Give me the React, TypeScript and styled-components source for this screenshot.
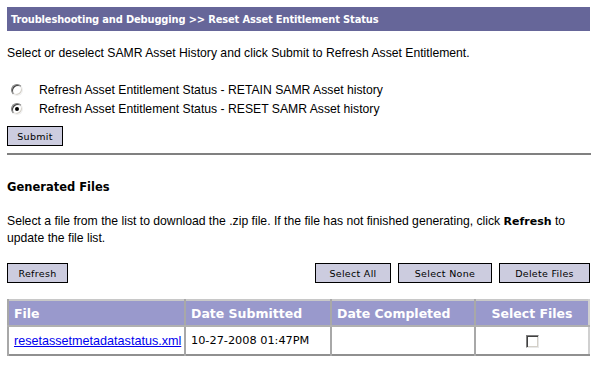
import React from "react";
import styled, { createGlobalStyle } from "styled-components";

const Global = createGlobalStyle`
  html, body { margin: 0; padding: 0; background: #ffffff; }
  body { padding: 7px 0 0 7px; font-family: "Liberation Sans", Arial, sans-serif; font-size: 12px; color: #000; }
`;

const Page = styled.div`
  width: 584px;
  display: flex;
  flex-direction: column;
`;

const TitleBar = styled.div`
  width: 583px;
  height: 24px;
  background: #666699;
  color: #ffffff;
  font-family: "DejaVu Sans Condensed", "DejaVu Sans", Verdana, sans-serif;
  font-stretch: condensed;
  font-weight: bold;
  font-size: 11px;
  letter-spacing: -0.15px;
  display: flex;
  align-items: center;
  padding-left: 4px;
  box-sizing: border-box;
`;

const Text = styled.p<{ $top: number }>`
  margin: ${(p) => p.$top}px 0 0 0;
  font-family: "Liberation Sans", Arial, sans-serif;
  font-size: 12.2px;
  line-height: 16px;
`;

const Strong = styled.b`
  font-family: "DejaVu Sans", Verdana, sans-serif;
  font-size: 11px;
  font-weight: bold;
`;

const RadioList = styled.div`
  margin-top: 19px;
  display: flex;
  flex-direction: column;
`;

const RadioRow = styled.label`
  height: 19px;
  display: flex;
  align-items: center;
  font-size: 12.2px;
`;

const RadioDot = styled.span<{ $checked?: boolean }>`
  width: 12px;
  height: 12px;
  margin-left: 4px;
  margin-right: 16px;
  box-sizing: border-box;
  border-radius: 50%;
  border: 1px solid;
  border-color: #808080 #f0f0f0 #f0f0f0 #808080;
  box-shadow: inset 1px 1px 0 #404040, inset -1px -1px 0 #d4d0c8;
  background: #ffffff;
  display: flex;
  align-items: center;
  justify-content: center;
  &::after {
    content: "";
    width: 4px;
    height: 4px;
    border-radius: 50%;
    background: ${(p) => (p.$checked ? "#000" : "transparent")};
  }
`;

const Button = styled.button<{ $w: number }>`
  width: ${(p) => p.$w}px;
  height: 20px;
  padding: 0;
  margin: 0;
  background: #ccccdf;
  border: 1px solid #000000;
  font-family: "DejaVu Sans", Verdana, sans-serif;
  font-size: 9.5px;
  letter-spacing: 0.3px;
  color: #000;
  cursor: pointer;
`;

const SubmitWrap = styled.div`
  margin-top: 8px;
  display: flex;
`;

const Divider = styled.hr`
  margin: 7px 0 0 0;
  width: 584px;
  height: 2px;
  border: none;
  background: #808080;
`;

const Heading = styled.h2`
  margin: 25px 0 0 0;
  font-family: "DejaVu Sans", Verdana, sans-serif;
  font-size: 11.5px;
  font-weight: bold;
  line-height: 14px;
`;

const ButtonBar = styled.div`
  margin-top: 17px;
  width: 583px;
  display: flex;
  align-items: center;
`;

const Spacer = styled.div`
  flex: 1;
`;

const ButtonGroup = styled.div`
  display: flex;
  gap: 7px;
`;

const Table = styled.table`
  margin-top: 16px;
  width: 583px;
  border-collapse: collapse;
  table-layout: fixed;
  border-top: 2px solid #c8c8c8;
  border-left: 2px solid #a0a0a0;
  border-right: 2px solid #d0d0d0;
  border-bottom: 2px solid #909090;
`;

const Th = styled.th<{ $center?: boolean }>`
  background: #9999cc;
  color: #ffffff;
  font-family: "DejaVu Sans", Verdana, sans-serif;
  font-size: 12.5px;
  font-weight: bold;
  height: 24px;
  padding: 0 5px;
  text-align: ${(p) => (p.$center ? "center" : "left")};
  border-left: 2px solid #a8a8a8;
  border-bottom: 2px solid #b0b0b0;
`;

const Td = styled.td<{ $center?: boolean }>`
  height: 27px;
  padding: 0 5px;
  vertical-align: middle;
  text-align: ${(p) => (p.$center ? "center" : "left")};
  border-left: 2px solid #a8a8a8;
  font-family: "DejaVu Sans", Verdana, sans-serif;
  font-size: 11.3px;
`;

const FileLink = styled.a`
  color: #0000ee;
  text-decoration: underline;
  font-family: "Liberation Sans", Arial, sans-serif;
  font-size: 12.6px;
`;

const CheckBox = styled.span`
  display: inline-block;
  width: 13px;
  height: 13px;
  box-sizing: border-box;
  border: 1px solid;
  border-color: #808080 #e8e8e8 #e8e8e8 #808080;
  box-shadow: inset 1px 1px 0 #404040, inset -1px -1px 0 #d4d0c8;
  background: #fff;
  vertical-align: middle;
  margin-top: 2px;
`;

export default function App() {
  return (
    <>
      <Global />
      <Page>
        <TitleBar>Troubleshooting and Debugging &gt;&gt; Reset Asset Entitlement Status</TitleBar>
        <Text $top={14}>
          Select or deselect SAMR Asset History and click Submit to Refresh Asset Entitlement.
        </Text>
        <RadioList>
          <RadioRow>
            <RadioDot />
            Refresh Asset Entitlement Status - RETAIN SAMR Asset history
          </RadioRow>
          <RadioRow>
            <RadioDot $checked />
            Refresh Asset Entitlement Status - RESET SAMR Asset history
          </RadioRow>
        </RadioList>
        <SubmitWrap>
          <Button $w={56}>Submit</Button>
        </SubmitWrap>
        <Divider />
        <Heading>Generated Files</Heading>
        <Text $top={19}>
          Select a file from the list to download the .zip file. If the file has not finished
          generating, click <Strong>Refresh</Strong> to update the file list.
        </Text>
        <ButtonBar>
          <Button $w={61}>Refresh</Button>
          <Spacer />
          <ButtonGroup>
            <Button $w={76}>Select All</Button>
            <Button $w={94}>Select None</Button>
            <Button $w={91}>Delete Files</Button>
          </ButtonGroup>
        </ButtonBar>
        <Table>
          <colgroup>
            <col style={{ width: 177 }} />
            <col style={{ width: 146 }} />
            <col style={{ width: 144 }} />
            <col />
          </colgroup>
          <thead>
            <tr>
              <Th>File</Th>
              <Th>Date Submitted</Th>
              <Th>Date Completed</Th>
              <Th $center>Select Files</Th>
            </tr>
          </thead>
          <tbody>
            <tr>
              <Td>
                <FileLink href="#">resetassetmetadatastatus.xml</FileLink>
              </Td>
              <Td>10-27-2008 01:47PM</Td>
              <Td></Td>
              <Td $center>
                <CheckBox />
              </Td>
            </tr>
          </tbody>
        </Table>
      </Page>
    </>
  );
}
